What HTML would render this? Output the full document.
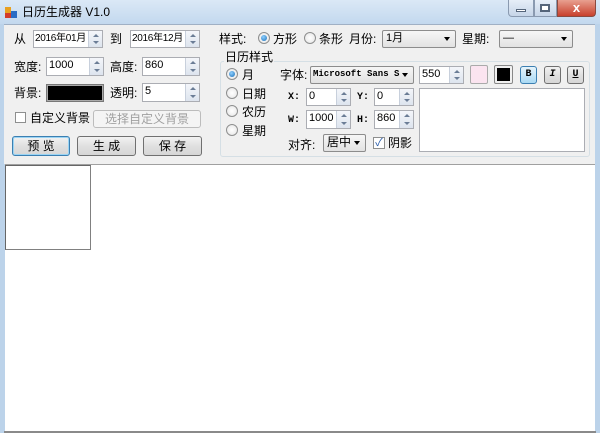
<!DOCTYPE html>
<html><head><meta charset="utf-8"><style>
*{margin:0;padding:0;box-sizing:border-box}
body{width:600px;height:433px;overflow:hidden;background:#bcd3ea;font-family:"Liberation Sans","Noto Sans CJK SC",sans-serif;font-size:12px;color:#000;position:relative}
.a{position:absolute;white-space:nowrap}
.t{line-height:14px}
.inp{position:absolute;background:#fff;border:1px solid #abadb3;font-size:11px;line-height:15px;padding-left:2px;overflow:hidden;white-space:nowrap}
.spin{position:absolute;right:0;top:0;bottom:0;width:14px;background:linear-gradient(#f4f6fa,#dde4ee);border-left:1px solid #c8d0dc}
.spin:before,.spin:after{content:"";position:absolute;left:4px;border-left:3px solid transparent;border-right:3px solid transparent}
.spin:before{top:3px;border-bottom:3px solid #6b7d96}
.spin:after{bottom:3px;border-top:3px solid #6b7d96}
.btn{position:absolute;border:1px solid #707070;border-radius:3px;background:linear-gradient(#f2f2f2,#e0e0e0 50%,#d6d6d6);text-align:center;font-size:12px}
.cb{position:absolute;border:1px solid #8e8f8f;background:#fff}
.rad{position:absolute;width:12px;height:12px;border-radius:50%;border:1px solid #8e8f8f;background:radial-gradient(#fff,#e4e4e4)}
.rad.on:after{content:"";position:absolute;left:2px;top:2px;width:6px;height:6px;border-radius:50%;background:radial-gradient(circle at 40% 35%,#8fd0ff,#1a6fb8)}
.cmb{position:absolute;background:linear-gradient(#f6f6f6,#e2e2e2);border:1px solid #8c8c8c;border-radius:2px;font-size:11px;line-height:15px;padding-left:3px;overflow:hidden;white-space:nowrap}
.cmb:after{content:"";position:absolute;right:5px;top:6px;border-left:3px solid transparent;border-right:3px solid transparent;border-top:4px solid #000}
.mono{font-family:"Liberation Mono",monospace;font-size:10px;font-weight:bold}
</style></head><body>
<div class="a" style="left:0;top:0;width:600px;height:24px;background:linear-gradient(#dbe8f6,#c3d8ee)"></div>
<div class="a" style="left:5px;top:7px;width:6px;height:6px;background:#e8a020"></div>
<div class="a" style="left:11px;top:11px;width:6px;height:7px;background:#2a6cc4"></div>
<div class="a" style="left:5px;top:13px;width:6px;height:5px;background:#d23a2a"></div>
<div class="a t" style="left:22px;top:5px;font-size:12px">日历生成器 V1.0</div>
<div class="a" style="left:508px;top:0;width:26px;height:17px;border:1px solid #8a9ab0;border-top:0;border-radius:0 0 0 4px;background:linear-gradient(#e6eef8,#c6d5e8)"></div>
<div class="a" style="left:516px;top:9px;width:10px;height:3px;background:#fff;border:1px solid #55657a"></div>
<div class="a" style="left:534px;top:0;width:23px;height:17px;border:1px solid #8a9ab0;border-top:0;background:linear-gradient(#e6eef8,#c6d5e8)"></div>
<div class="a" style="left:540px;top:4px;width:10px;height:8px;border:2px solid #55657a;background:#fff"></div>
<div class="a" style="left:557px;top:0;width:39px;height:17px;border:1px solid #8a4a40;border-top:0;border-radius:0 0 4px 0;background:linear-gradient(#e8a090,#c8402c);color:#fff;font-weight:bold;text-align:center;line-height:15px;font-size:13px">x</div>

<div class="a" style="left:4px;top:24px;width:591px;height:140px;background:#f0f0f0;border-top:1px solid #a0b0c4"></div>
<div class="a" style="left:5px;top:164px;width:590px;height:267px;background:#fff;border-top:1px solid #a0a0a0"></div>
<div class="a" style="left:4px;top:431px;width:592px;height:2px;background:#8a8a8a"></div>
<div class="a" style="left:5px;top:165px;width:86px;height:85px;border:1px solid #808080;border-top-color:#666;border-left-color:#666"></div>

<div class="a t" style="left:14px;top:32px">从</div>
<div class="inp" style="left:33px;top:30px;width:70px;height:18px;font-size:10px;letter-spacing:-0.3px;padding-left:1px">2016年01月<div class="spin"></div></div>
<div class="a t" style="left:110px;top:32px">到</div>
<div class="inp" style="left:130px;top:30px;width:70px;height:18px;font-size:10px;letter-spacing:-0.3px;padding-left:1px">2016年12月<div class="spin"></div></div>
<div class="a t" style="left:14px;top:60px">宽度:</div>
<div class="inp" style="left:46px;top:57px;width:58px;height:19px">1000<div class="spin"></div></div>
<div class="a t" style="left:110px;top:60px">高度:</div>
<div class="inp" style="left:142px;top:57px;width:58px;height:19px">860<div class="spin"></div></div>
<div class="a t" style="left:14px;top:86px">背景:</div>
<div class="a" style="left:46px;top:84px;width:58px;height:18px;border:1px solid #777;background:#000;box-shadow:inset 0 0 0 1px #aaa"></div>
<div class="a t" style="left:110px;top:86px">透明:</div>
<div class="inp" style="left:142px;top:83px;width:58px;height:19px">5<div class="spin"></div></div>
<div class="cb" style="left:15px;top:112px;width:11px;height:11px"></div>
<div class="a t" style="left:30px;top:111px">自定义背景</div>
<div class="btn" style="left:93px;top:110px;width:108px;height:18px;border-color:#bcbcbc;background:#f4f4f4;color:#a0a0a0;line-height:16px">选择自定义背景</div>
<div class="btn" style="left:12px;top:136px;width:58px;height:20px;border-color:#3c7fb1;box-shadow:inset 0 0 0 1px #9ad4f4;line-height:18px">预 览</div>
<div class="btn" style="left:77px;top:136px;width:59px;height:20px;line-height:18px">生 成</div>
<div class="btn" style="left:143px;top:136px;width:59px;height:20px;line-height:18px">保 存</div>

<div class="a t" style="left:219px;top:32px">样式:</div>
<div class="rad on" style="left:258px;top:32px"></div>
<div class="a t" style="left:273px;top:32px">方形</div>
<div class="rad" style="left:304px;top:32px"></div>
<div class="a t" style="left:319px;top:32px">条形</div>
<div class="a t" style="left:349px;top:32px">月份:</div>
<div class="cmb" style="left:382px;top:30px;width:74px;height:18px">1月</div>
<div class="a t" style="left:462px;top:32px">星期:</div>
<div class="cmb" style="left:499px;top:30px;width:74px;height:18px">—</div>

<div class="a" style="left:220px;top:61px;width:370px;height:96px;border:1px solid #d5dfe5;border-radius:3px"></div>
<div class="a t" style="left:224px;top:50px;background:#f0f0f0;padding:0 1px">日历样式</div>
<div class="rad on" style="left:226px;top:68px"></div><div class="a t" style="left:242px;top:68px">月</div>
<div class="rad" style="left:226px;top:87px"></div><div class="a t" style="left:242px;top:87px">日期</div>
<div class="rad" style="left:226px;top:105px"></div><div class="a t" style="left:242px;top:105px">农历</div>
<div class="rad" style="left:226px;top:124px"></div><div class="a t" style="left:242px;top:124px">星期</div>

<div class="a t" style="left:280px;top:68px">字体:</div>
<div class="cmb mono" style="left:310px;top:66px;width:104px;height:18px;font-size:9px;padding-left:2px;padding-right:14px">Microsoft Sans S</div>
<div class="inp" style="left:419px;top:66px;width:45px;height:18px">550<div class="spin"></div></div>
<div class="a" style="left:470px;top:65px;width:18px;height:19px;border:1px solid #aaa;border-radius:2px;background:#fbe4f0"></div>
<div class="a" style="left:494px;top:65px;width:19px;height:19px;border:1px solid #888;border-radius:2px;background:#f0f0f0"><div style="margin:2px;width:13px;height:13px;background:#000"></div></div>
<div class="btn mono" style="left:520px;top:66px;width:17px;height:18px;border-color:#3c7fb1;background:linear-gradient(#e6f4fc,#a9d9f4);line-height:16px">B</div>
<div class="btn mono" style="left:544px;top:66px;width:17px;height:18px;line-height:16px;font-style:italic">I</div>
<div class="btn mono" style="left:567px;top:66px;width:17px;height:18px;line-height:16px;text-decoration:underline">U</div>

<div class="a mono" style="left:288px;top:92px">X:</div>
<div class="inp" style="left:306px;top:88px;width:45px;height:18px">0<div class="spin"></div></div>
<div class="a mono" style="left:357px;top:92px">Y:</div>
<div class="inp" style="left:374px;top:88px;width:40px;height:18px">0<div class="spin"></div></div>
<div class="a mono" style="left:288px;top:115px">W:</div>
<div class="inp" style="left:306px;top:110px;width:45px;height:19px">1000<div class="spin"></div></div>
<div class="a mono" style="left:357px;top:115px">H:</div>
<div class="inp" style="left:374px;top:110px;width:40px;height:19px">860<div class="spin"></div></div>
<div class="a" style="left:419px;top:88px;width:166px;height:64px;background:#fff;border:1px solid #abadb3"></div>
<div class="a t" style="left:288px;top:138px">对齐:</div>
<div class="cmb" style="left:323px;top:134px;width:43px;height:18px;font-size:12px">居中</div>
<div class="cb" style="left:373px;top:137px;width:12px;height:12px;color:#2a5caa;font-size:11px;line-height:10px;text-align:center">✓</div>
<div class="a t" style="left:388px;top:136px">阴影</div>
</body></html>
